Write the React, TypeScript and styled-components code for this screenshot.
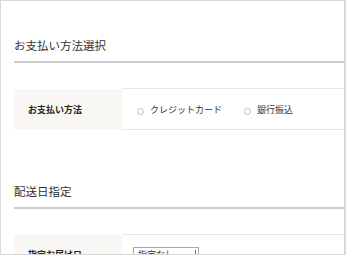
import React from 'react';
import styled, { createGlobalStyle } from 'styled-components';

const GlobalStyle = createGlobalStyle`
    html, body {
        margin: 0;
        padding: 0;
        background: #fff;
    }
    body {
        font-family: "Noto Sans CJK JP", "Noto Sans", sans-serif;
        color: #333;
    }
`;

const Frame = styled.div`
    box-sizing: border-box;
    width: 346px;
    height: 255px;
    overflow: hidden;
    border: 1px solid #d9d9d9;
    border-right-width: 2px;
    padding-left: 13px;
`;

const Section = styled.section<{ $top: number }>`
    margin-top: ${({ $top }) => $top}px;
`;

const SectionTitle = styled.h2`
    margin: 0;
    font-size: 11.5px;
    font-weight: normal;
    line-height: 18px;
    color: #333;
    padding-bottom: 7px;
    border-bottom: 2px solid #cbcbcb;
`;

const FormTable = styled.div`
    margin-top: 25px;
`;

const FormRow = styled.div`
    display: flex;
    height: 42px;
`;

const Label = styled.div`
    box-sizing: border-box;
    width: 108px;
    flex-shrink: 0;
    display: flex;
    align-items: center;
    padding-left: 14px;
    background: #f8f7f3;
    border-top: 1px solid #fff;
    border-bottom: 1px solid #fff;
    font-size: 9px;
    font-weight: bold;
    color: #222;
`;

const Field = styled.div`
    box-sizing: border-box;
    flex: 1;
    display: flex;
    align-items: center;
    padding-left: 15px;
    border-top: 1px solid #e8e8e8;
    border-bottom: 1px solid #e8e8e8;
`;

const RadioOption = styled.label`
    display: flex;
    align-items: center;
    margin-right: 22px;
    font-size: 9px;
    color: #333;
`;

const RadioCircle = styled.span`
    box-sizing: border-box;
    width: 7px;
    height: 7px;
    margin-top: 4px;
    margin-right: 6px;
    border: 1px solid #bdbdbd;
    border-radius: 50%;
    background: #fff;
`;

const SelectBox = styled.div`
    position: relative;
    box-sizing: border-box;
    width: 66px;
    height: 16px;
    margin-top: 12px;
    margin-left: -4px;
    border: 1px solid #a9a9a9;
    font-size: 9px;
    line-height: 14px;
    padding-left: 4px;
    color: #333;
`;

const SelectArrow = styled.span`
    position: absolute;
    right: 2px;
    top: 2px;
    width: 8px;
    height: 9px;
    border-right: 1px solid #777;
    border-bottom: 1px solid #777;
`;

const ClippedLabel = styled(Label)`
    align-items: flex-start;
    padding-top: 13px;
`;

const SelectField = styled(Field)`
    align-items: flex-start;
    border-bottom: none;
`;

export default function App() {
    return (
        <>
            <GlobalStyle />
            <Frame>
                <Section $top={35}>
                    <SectionTitle>お支払い方法選択</SectionTitle>
                    <FormTable>
                        <FormRow>
                            <Label>お支払い方法</Label>
                            <Field>
                                <RadioOption>
                                    <RadioCircle />
                                    クレジットカード
                                </RadioOption>
                                <RadioOption>
                                    <RadioCircle />
                                    銀行振込
                                </RadioOption>
                            </Field>
                        </FormRow>
                    </FormTable>
                </Section>
                <Section $top={52}>
                    <SectionTitle>配送日指定</SectionTitle>
                    <FormTable>
                        <FormRow>
                            <ClippedLabel>指定お届け日</ClippedLabel>
                            <SelectField>
                                <SelectBox>
                                    指定なし
                                    <SelectArrow />
                                </SelectBox>
                            </SelectField>
                        </FormRow>
                    </FormTable>
                </Section>
            </Frame>
        </>
    );
}
